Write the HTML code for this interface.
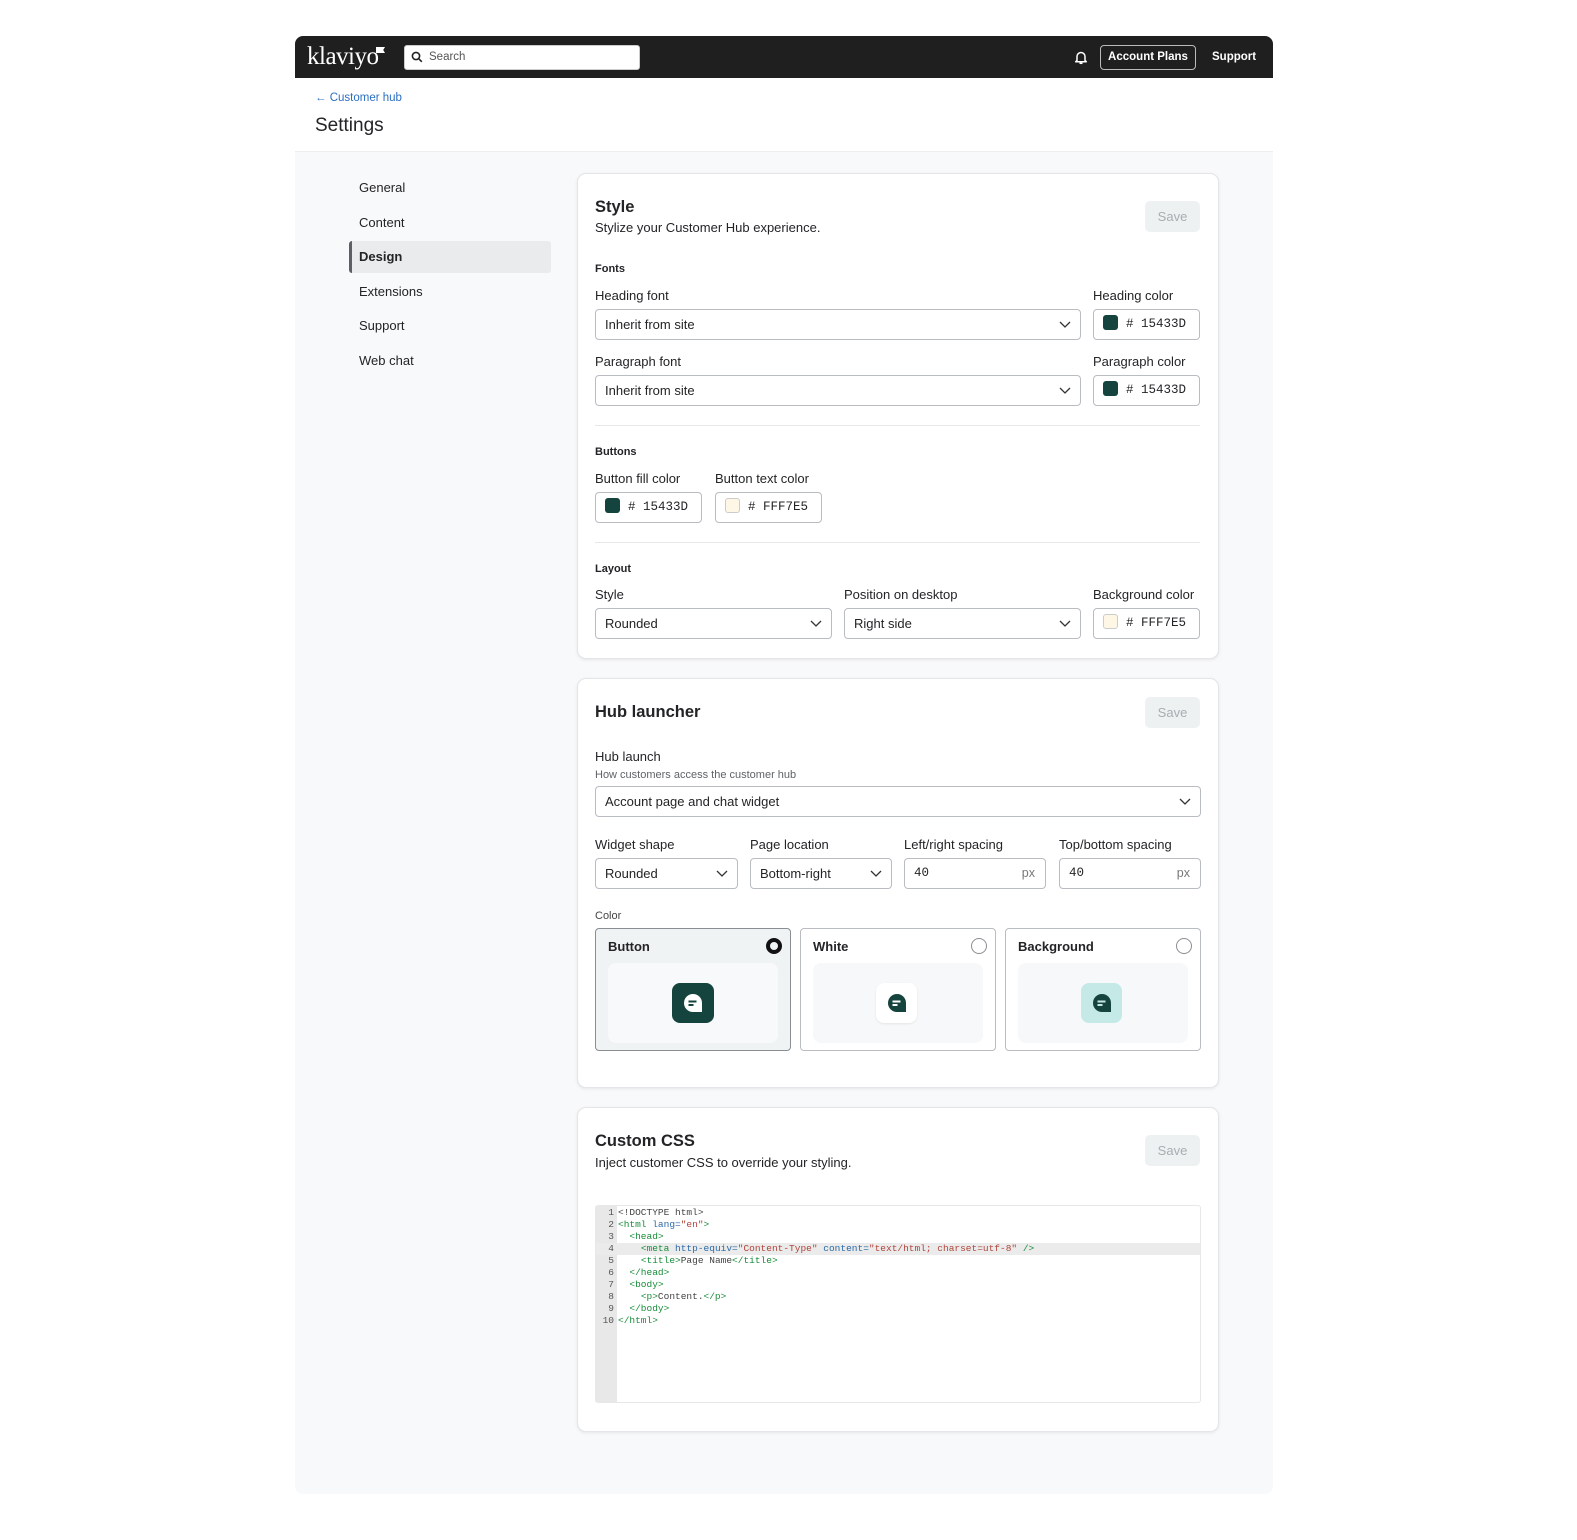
<!DOCTYPE html>
<html><head><meta charset="utf-8">
<style>
*{box-sizing:border-box;margin:0;padding:0}
body{width:1577px;height:1540px;background:#fff;font-family:"Liberation Sans",sans-serif;color:#232426;position:relative;overflow:hidden}
.a{position:absolute}
.t{position:absolute;font-size:13px;line-height:20px;white-space:nowrap}
.h{font-size:16.5px;font-weight:600}
.sub{font-size:11px;font-weight:700}
.in{position:absolute;height:31px;border:1px solid #b9bcc0;border-radius:4px;background:#fff;font-size:13px;line-height:29px;padding-left:9px;white-space:nowrap}
.chev{position:absolute;right:9px;top:11px}
.card{position:absolute;left:577px;width:642px;background:#fff;border:1px solid #e3e5e8;border-radius:9px;box-shadow:0 1px 3px rgba(0,0,0,.08)}
.save{position:absolute;width:55px;height:31px;border-radius:5px;background:#eef1f2;color:#a9adb2;font-size:13px;line-height:31px;text-align:center}
.sw{display:inline-block;width:15px;height:15px;border-radius:3px;vertical-align:-3px;margin-right:8px}
.mono{font-family:"Liberation Mono",monospace;font-size:12.5px}
.hr{position:absolute;left:595px;width:605px;height:1px;background:#e6e8ea}
.opt{position:absolute;top:928px;width:196px;height:123px;border:1px solid #b9bcc0;border-radius:4px;background:#fff}
.opt .pv{position:absolute;left:12px;top:34px;width:170px;height:80px;background:#f6f8f9;border-radius:8px}
.opt .lb{position:absolute;left:12px;top:8px;font-size:13px;font-weight:600;line-height:20px}
.opt .rd{position:absolute;right:8px;top:9px;width:16px;height:16px;border:1.5px solid #8a8e93;border-radius:50%}
.code{font-family:"Liberation Mono",monospace;font-size:9.5px;line-height:12px;white-space:pre}
.tg{color:#178d3a}.at{color:#2a6aa8}.st{color:#b0443a}
</style></head><body>
<!-- frame -->
<div class="a" style="left:295px;top:36px;width:978px;height:1458px;background:#f8f9fa;border-radius:8px;overflow:hidden">
  <div class="a" style="left:0;top:0;width:978px;height:42px;background:#1f1f20"></div>
  <div class="a" style="left:0;top:42px;width:978px;height:74px;background:#fff;border-bottom:1px solid #eceef0"></div>
</div>
<!-- top bar -->
<div class="t" style="left:307px;top:43px;font-family:'Liberation Serif',serif;font-size:25px;line-height:28px;color:#fff;letter-spacing:-0.5px">klaviyo</div>
<div class="a" style="left:376px;top:47px;width:9px;height:6px;background:#fff;clip-path:polygon(0 0,100% 0,80% 50%,100% 100%,0 100%)"></div>
<div class="a" style="left:404px;top:45px;width:236px;height:25px;background:#fff;border-radius:3px;border:1px solid #ccc"></div>
<svg class="a" style="left:411px;top:51px" width="12" height="12" viewBox="0 0 12 12"><circle cx="5" cy="5" r="3.6" fill="none" stroke="#222" stroke-width="1.6"/><line x1="7.6" y1="7.6" x2="10.8" y2="10.8" stroke="#222" stroke-width="1.6"/></svg>
<div class="t" style="left:429px;top:47px;font-size:11.5px;color:#555">Search</div>
<svg class="a" style="left:1074px;top:50px" width="14" height="15" viewBox="0 0 14 15"><path d="M3 10.5V6.5a4 4 0 0 1 8 0v4l1.3 1.2H1.7z" fill="none" stroke="#fff" stroke-width="1.5" stroke-linejoin="round"/><path d="M5.5 13.3h3" stroke="#fff" stroke-width="1.5"/></svg>
<div class="a" style="left:1100px;top:45px;width:96px;height:25px;border:1px solid #bbb;border-radius:4px;color:#fff;font-size:11.5px;font-weight:700;line-height:23px;text-align:center">Account Plans</div>
<div class="t" style="left:1212px;top:47px;font-size:11.5px;font-weight:700;color:#fff">Support</div>
<!-- header -->
<div class="t" style="left:315px;top:88px;font-size:11.5px;color:#2b6fc1">← Customer hub</div>
<div class="t" style="left:315px;top:114px;font-size:19px;line-height:24px">Settings</div>
<!-- sidebar -->
<div class="t" style="left:359px;top:178px">General</div>
<div class="t" style="left:359px;top:213px">Content</div>
<div class="a" style="left:349px;top:241px;width:202px;height:32px;background:#e9ebed;border-radius:3px;border-left:3px solid #5c5f63"></div>
<div class="t" style="left:359px;top:247px;font-weight:600">Design</div>
<div class="t" style="left:359px;top:282px">Extensions</div>
<div class="t" style="left:359px;top:316px">Support</div>
<div class="t" style="left:359px;top:351px">Web chat</div>

<!-- Style card -->
<div class="card" style="top:173px;height:486px"></div>
<div class="t h" style="left:595px;top:197px">Style</div>
<div class="t" style="left:595px;top:218px">Stylize your Customer Hub experience.</div>
<div class="save" style="left:1145px;top:201px">Save</div>
<div class="t sub" style="left:595px;top:259px">Fonts</div>
<div class="t" style="left:595px;top:286px">Heading font</div>
<div class="t" style="left:1093px;top:286px">Heading color</div>
<div class="in" style="left:595px;top:309px;width:486px">Inherit from site<svg class="chev" width="12" height="7" viewBox="0 0 12 7"><polyline points="1,1 6,6 11,1" fill="none" stroke="#333" stroke-width="1.3"/></svg></div>
<div class="in mono" style="left:1093px;top:309px;width:107px"><span class="sw" style="background:#15433d"></span># 15433D</div>
<div class="t" style="left:595px;top:352px">Paragraph font</div>
<div class="t" style="left:1093px;top:352px">Paragraph color</div>
<div class="in" style="left:595px;top:375px;width:486px">Inherit from site<svg class="chev" width="12" height="7" viewBox="0 0 12 7"><polyline points="1,1 6,6 11,1" fill="none" stroke="#333" stroke-width="1.3"/></svg></div>
<div class="in mono" style="left:1093px;top:375px;width:107px"><span class="sw" style="background:#15433d"></span># 15433D</div>
<div class="hr" style="top:425px"></div>
<div class="t sub" style="left:595px;top:442px">Buttons</div>
<div class="t" style="left:595px;top:469px">Button fill color</div>
<div class="t" style="left:715px;top:469px">Button text color</div>
<div class="in mono" style="left:595px;top:492px;width:107px"><span class="sw" style="background:#15433d"></span># 15433D</div>
<div class="in mono" style="left:715px;top:492px;width:107px"><span class="sw" style="background:#fff7e5;border:1px solid #ccc"></span># FFF7E5</div>
<div class="hr" style="top:542px"></div>
<div class="t sub" style="left:595px;top:559px">Layout</div>
<div class="t" style="left:595px;top:585px">Style</div>
<div class="t" style="left:844px;top:585px">Position on desktop</div>
<div class="t" style="left:1093px;top:585px">Background color</div>
<div class="in" style="left:595px;top:608px;width:237px">Rounded<svg class="chev" width="12" height="7" viewBox="0 0 12 7"><polyline points="1,1 6,6 11,1" fill="none" stroke="#333" stroke-width="1.3"/></svg></div>
<div class="in" style="left:844px;top:608px;width:237px">Right side<svg class="chev" width="12" height="7" viewBox="0 0 12 7"><polyline points="1,1 6,6 11,1" fill="none" stroke="#333" stroke-width="1.3"/></svg></div>
<div class="in mono" style="left:1093px;top:608px;width:107px"><span class="sw" style="background:#fff7e5;border:1px solid #ccc"></span># FFF7E5</div>

<!-- Hub launcher -->
<div class="card" style="top:678px;height:410px"></div>
<div class="t h" style="left:595px;top:702px">Hub launcher</div>
<div class="save" style="left:1145px;top:697px">Save</div>
<div class="t" style="left:595px;top:747px">Hub launch</div>
<div class="t" style="left:595px;top:765px;font-size:11px;color:#5f6368">How customers access the customer hub</div>
<div class="in" style="left:595px;top:786px;width:606px">Account page and chat widget<svg class="chev" width="12" height="7" viewBox="0 0 12 7"><polyline points="1,1 6,6 11,1" fill="none" stroke="#333" stroke-width="1.3"/></svg></div>
<div class="t" style="left:595px;top:835px">Widget shape</div>
<div class="t" style="left:750px;top:835px">Page location</div>
<div class="t" style="left:904px;top:835px">Left/right spacing</div>
<div class="t" style="left:1059px;top:835px">Top/bottom spacing</div>
<div class="in" style="left:595px;top:858px;width:143px">Rounded<svg class="chev" width="12" height="7" viewBox="0 0 12 7"><polyline points="1,1 6,6 11,1" fill="none" stroke="#333" stroke-width="1.3"/></svg></div>
<div class="in" style="left:750px;top:858px;width:142px">Bottom-right<svg class="chev" width="12" height="7" viewBox="0 0 12 7"><polyline points="1,1 6,6 11,1" fill="none" stroke="#333" stroke-width="1.3"/></svg></div>
<div class="in mono" style="left:904px;top:858px;width:142px">40<span style="position:absolute;right:10px;font-family:'Liberation Sans';color:#777">px</span></div>
<div class="in mono" style="left:1059px;top:858px;width:142px">40<span style="position:absolute;right:10px;font-family:'Liberation Sans';color:#777">px</span></div>
<div class="t" style="left:595px;top:906px;font-size:11px;color:#444">Color</div>
<div class="opt" style="left:595px;background:#f0f3f4;border-color:#8a8e93"><div class="lb">Button</div><div class="rd" style="border:4px solid #111;top:9px"></div><div class="pv" style="background:#f7f9fa"><div class="a" style="left:64px;top:20px;width:42px;height:40px;border-radius:8px;background:#15433d"></div><svg class="a" style="left:75px;top:30px" width="21" height="21" viewBox="0 0 21 21"><path d="M10 1a9 9 0 1 0 0 18h9v-9a9 9 0 0 0-9-9z" fill="#fff"/><rect x="5.5" y="7.5" width="8" height="2" fill="#15433d"/><rect x="5.5" y="11" width="5" height="2" fill="#15433d"/></svg></div></div>
<div class="opt" style="left:800px"><div class="lb">White</div><div class="rd"></div><div class="pv"><div class="a" style="left:63px;top:20px;width:41px;height:40px;border-radius:8px;background:#fff;box-shadow:0 1px 2px rgba(0,0,0,.08)"></div><svg class="a" style="left:74px;top:30px" width="21" height="21" viewBox="0 0 21 21"><path d="M10 1a9 9 0 1 0 0 18h9v-9a9 9 0 0 0-9-9z" fill="#15433d"/><rect x="5.5" y="7.5" width="8" height="2" fill="#fff"/><rect x="5.5" y="11" width="5" height="2" fill="#fff"/></svg></div></div>
<div class="opt" style="left:1005px"><div class="lb">Background</div><div class="rd"></div><div class="pv"><div class="a" style="left:63px;top:20px;width:41px;height:40px;border-radius:8px;background:#c5e9e6"></div><svg class="a" style="left:74px;top:30px" width="21" height="21" viewBox="0 0 21 21"><path d="M10 1a9 9 0 1 0 0 18h9v-9a9 9 0 0 0-9-9z" fill="#15433d"/><rect x="5.5" y="7.5" width="8" height="2" fill="#c5e9e6"/><rect x="5.5" y="11" width="5" height="2" fill="#c5e9e6"/></svg></div></div>

<!-- Custom CSS -->
<div class="card" style="top:1107px;height:325px"></div>
<div class="t h" style="left:595px;top:1131px">Custom CSS</div>
<div class="t" style="left:595px;top:1153px">Inject customer CSS to override your styling.</div>
<div class="save" style="left:1145px;top:1135px">Save</div>
<div class="a" style="left:595px;top:1205px;width:606px;height:198px;border:1px solid #e6e8ea;border-radius:3px;background:#fff;overflow:hidden">
  <div class="a" style="left:0;top:0;width:21px;height:198px;background:#e8e8e8"></div>
  <div class="a" style="left:0;top:37px;width:606px;height:12px;background:#ebebeb"></div>
  <div class="a code" style="left:3px;top:1px;color:#555;text-align:right;width:15px"> 1
 2
 3
 4
 5
 6
 7
 8
 9
10</div>
  <div class="a code" style="left:22px;top:1px;color:#444">&lt;!DOCTYPE html&gt;
<span class="tg">&lt;html</span> <span class="at">lang=</span><span class="st">"en"</span><span class="tg">&gt;</span>
  <span class="tg">&lt;head&gt;</span>
    <span class="tg">&lt;meta</span> <span class="at">http-equiv=</span><span class="st">"Content-Type"</span> <span class="at">content=</span><span class="st">"text/html; charset=utf-8"</span> <span class="tg">/&gt;</span>
    <span class="tg">&lt;title&gt;</span>Page Name<span class="tg">&lt;/title&gt;</span>
  <span class="tg">&lt;/head&gt;</span>
  <span class="tg">&lt;body&gt;</span>
    <span class="tg">&lt;p&gt;</span>Content.<span class="tg">&lt;/p&gt;</span>
  <span class="tg">&lt;/body&gt;</span>
<span class="tg">&lt;/html&gt;</span></div>
</div>
</body></html>
